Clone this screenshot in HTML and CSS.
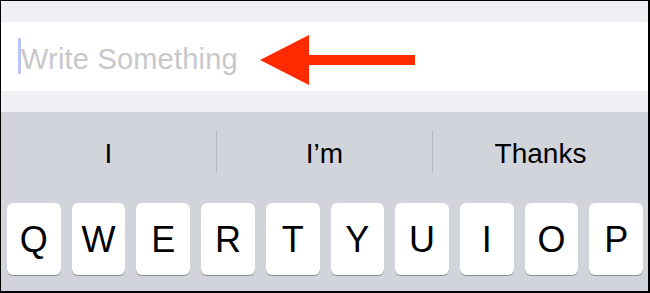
FILE: index.html
```html
<!DOCTYPE html>
<html lang="en">
<head>
  <meta charset="UTF-8" />
  <title>Write Something</title>
  <meta name="viewport" content="width=device-width, initial-scale=1.0" />
  <link rel="stylesheet" href="styles.css">
</head>
<body>
  <div class="screen">
    <div class="band"></div>
    <div class="field">
      <span class="cursor"></span>
      <span class="placeholder">Write Something</span>
      <svg class="arrow" width="155" height="50" viewBox="0 0 155 50">
        <polygon points="0,25 49,0 49,20 155,20 155,30 49,30 49,50" fill="#ff2a00" />
      </svg>
    </div>
    <div class="band"></div>

    <div class="keyboard">
      <div class="suggestions">
        <div class="suggestion">I</div>
        <div class="suggestion">I’m</div>
        <div class="suggestion">Thanks</div>
      </div>
      <div class="keys">
        <div class="key">Q</div>
        <div class="key">W</div>
        <div class="key">E</div>
        <div class="key">R</div>
        <div class="key">T</div>
        <div class="key">Y</div>
        <div class="key">U</div>
        <div class="key">I</div>
        <div class="key">O</div>
        <div class="key">P</div>
      </div>
    </div>
  </div>
</body>
</html>
```

FILE: styles.css
```css
body {
  margin: 0;
  font-family: "Liberation Sans", Arial, sans-serif;
}
.screen {
  width: 650px;
  height: 293px;
  box-sizing: border-box;
  border: 1px solid #000;
  border-right-width: 2px;
  border-bottom-width: 2px;
  display: flex;
  flex-direction: column;
  overflow: hidden;
}
.band {
  height: 21px;
  background: #efeff4;
}
.field {
  position: relative;
  height: 69px;
  background: #fff;
  display: flex;
  align-items: center;
  padding-left: 17px;
}
.cursor {
  width: 3px;
  height: 36px;
  margin-top: -2px;
  background: #b9c4fa;
  border-radius: 1px;
}
.placeholder {
  font-size: 29px;
  color: #c7c7cc;
  padding-top: 5px;
  letter-spacing: 0.2px;
}
.arrow {
  position: absolute;
  left: 259px;
  top: 13px;
}
.keyboard {
  flex: 1;
  background: #d1d5db;
}
.suggestions {
  height: 78px;
  display: flex;
  align-items: center;
}
.suggestion {
  flex: 1;
  text-align: center;
  font-size: 28px;
  color: #000;
  line-height: 43px;
  padding-top: 2px;
  height: 41px;
}
.suggestion + .suggestion {
  border-left: 1px solid #b4b8bf;
}
.keys {
  display: flex;
  gap: 11px;
  padding: 13px 5px 0 6px;
}
.key {
  flex: 1;
  height: 70px;
  padding-top: 2px;
  background: #fff;
  border-radius: 6px;
  box-shadow: 0 1px 0 #888d94;
  display: flex;
  align-items: center;
  justify-content: center;
  font-size: 36px;
  color: #000;
}
```
